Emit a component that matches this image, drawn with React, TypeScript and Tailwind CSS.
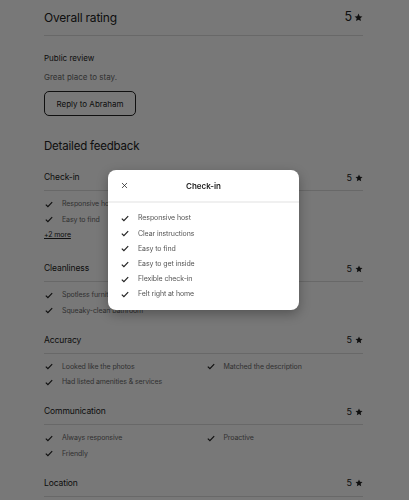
import { X } from "lucide-react";

type Section = {
  title: string;
  items: string[];
  more?: string;
  grid?: boolean;
};

const sections: Section[] = [
  { title: "Check-in", items: ["Responsive host", "Easy to find"], more: "+2 more" },
  { title: "Cleanliness", items: ["Spotless furniture & linens", "Squeaky-clean bathroom"] },
  { title: "Accuracy", items: ["Looked like the photos", "Matched the description", "Had listed amenities & services"], grid: true },
  { title: "Communication", items: ["Always responsive", "Proactive", "Friendly"], grid: true },
  { title: "Location", items: [] },
];

const modalItems = [
  "Responsive host",
  "Clear instructions",
  "Easy to find",
  "Easy to get inside",
  "Flexible check-in",
  "Felt right at home",
];

function Check() {
  return (
    <svg width="8" height="7" viewBox="0 0 8 7" fill="none" className="shrink-0">
      <path d="M0.8 3.6 L2.9 5.7 L7.2 1.2" stroke="#222" strokeWidth="1.2" />
    </svg>
  );
}

function Star({ size }: { size: number }) {
  return (
    <svg width={size} height={size} viewBox="0 0 24 24" fill="#222">
      <path d="M12 1.5l3.1 7 7.4.7-5.6 5 1.7 7.4L12 17.8l-6.6 3.8 1.7-7.4-5.6-5 7.4-.7z" />
    </svg>
  );
}

function Rating({ big }: { big?: boolean }) {
  return (
    <span className={big ? "flex items-center gap-[2px] text-[12.5px] text-[#222]" : "flex items-center gap-[3px] text-[9px] text-[#222]"}>
      5
      <Star size={big ? 9 : 8} />
    </span>
  );
}

function FeedbackSection({ section }: { section: Section }) {
  return (
    <div className="pb-[9px]">
      <div className="flex h-[26px] items-center justify-between border-b border-[#dddddd]">
        <span className="text-[8.5px] tracking-[-0.1px] text-[#222]">{section.title}</span>
        <Rating />
      </div>
      {section.items.length > 0 && (
        <div className={section.grid ? "grid grid-cols-2 gap-x-[4px] pt-[5.5px]" : "flex flex-col pt-[5.5px]"}>
          {section.items.map((item) => (
            <div key={item} className="flex h-[15.5px] items-center gap-[9px] pl-[1px]">
              <Check />
              <span className="text-[7px] tracking-[-0.1px] text-[#6a6a6a] whitespace-nowrap">{item}</span>
            </div>
          ))}
        </div>
      )}
      {section.more && (
        <div className="mb-[4px] flex h-[15.5px] items-center">
          <span className="text-[7px] tracking-[-0.1px] text-[#222] underline">{section.more}</span>
        </div>
      )}
    </div>
  );
}

export default function App() {
  return (
    <div className="relative h-[500px] w-[409px] overflow-hidden bg-white font-['Inter',sans-serif]">
      <div className="ml-[44px] w-[319px]">
        <div className="flex h-[36px] items-center justify-between border-b border-[#dddddd]">
          <span className="text-[12px] tracking-[-0.2px] text-[#222]">Overall rating</span>
          <Rating big />
        </div>
        <p className="mt-[16px] text-[8px] leading-[12px] text-[#222]">Public review</p>
        <p className="mt-[7px] text-[8px] leading-[12px] text-[#6a6a6a]">Great place to stay.</p>
        <button className="mt-[8px] h-[25px] w-[92px] rounded-[5px] border border-[#222] text-[8px] text-[#222]">
          Reply to Abraham
        </button>
        <h2 className="mt-[22px] text-[11.5px] leading-[16px] tracking-[-0.2px] text-[#222]">Detailed feedback</h2>
        <div className="mt-[11px] flex flex-col">
          {sections.map((s) => (
            <FeedbackSection key={s.title} section={s} />
          ))}
        </div>
      </div>

      <div className="absolute inset-0 bg-black/[0.53]" />

      <div className="absolute left-[108px] top-[170px] h-[140px] w-[191px] rounded-[8px] bg-white shadow-[0_4px_12px_rgba(0,0,0,0.3)] [will-change:transform]">
        <div className="relative flex h-[33px] items-center justify-center border-b-[2px] border-[#f0f0f0]">
          <X size={9} strokeWidth={2} className="absolute left-[12px] text-[#222]" />
          <span className="text-[8px] font-semibold text-[#222]">Check-in</span>
        </div>
        <div className="flex flex-col pl-[13px] pt-[8px]">
          {modalItems.map((item) => (
            <div key={item} className="flex h-[15.2px] items-center gap-[9px]">
              <Check />
              <span className="text-[7px] tracking-[-0.1px] text-[#555]">{item}</span>
            </div>
          ))}
        </div>
      </div>
    </div>
  );
}
